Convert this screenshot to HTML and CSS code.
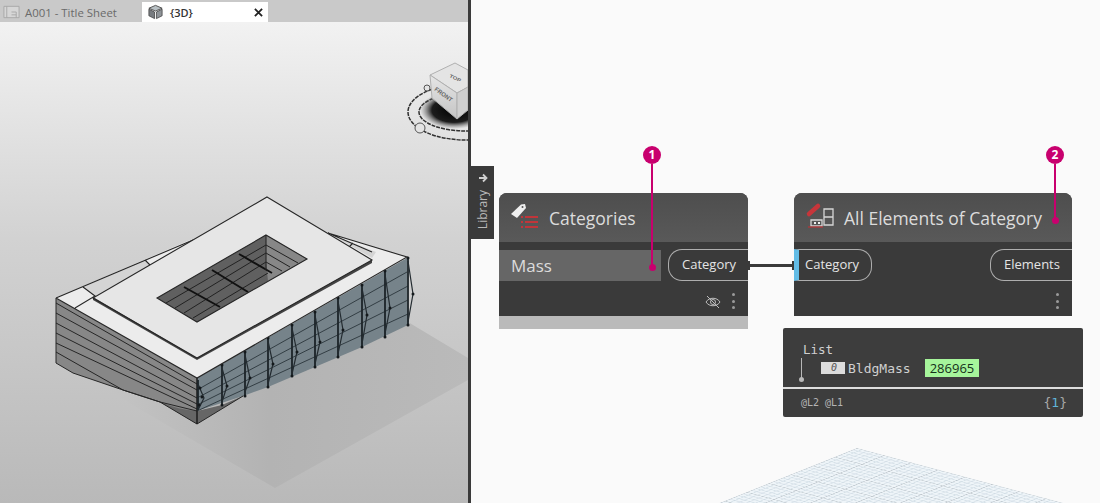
FILE: index.html
```html
<!DOCTYPE html>
<html lang="en">
<head>
<meta charset="utf-8">
<title>Dynamo and Revit</title>
<link rel="stylesheet" href="styles.css">
</head>
<body>
<div class="app">
  <section class="revit">
    <div class="tabs">
      <div class="tab">
        <svg class="tab-icon" viewBox="0 0 18 16"><path class="ti-sheet" d="M1 2h16v12H1zM4 2v12M9 8h5v6M9 11h5"/></svg>
        <span>A001 - Title Sheet</span>
      </div>
      <div class="tab tab-active">
        <svg class="tab-icon" viewBox="0 0 18 16"><path class="ti-top" d="M9 1l7 3-7 3-7-3z"/><path class="ti-left" d="M2 5l6 3v7l-6-3z"/><path class="ti-right" d="M16 5l-6 3v7l6-3z"/></svg>
        <span class="tab-name">{3D}</span>
        <svg class="tab-close" viewBox="0 0 10 10"><path d="M1 1l8 8M9 1l-8 8"/></svg>
      </div>
    </div>
    <div class="viewport">
      <svg class="scene" viewBox="0 22 468 481">
        <defs>
          <linearGradient id="floor" x1="0" y1="0" x2="0" y2="1">
            <stop offset="0" stop-color="#f2f2f2"/>
            <stop offset=".45" stop-color="#d2d2d2"/>
            <stop offset="1" stop-color="#b9b9b9"/>
          </linearGradient>
          <linearGradient id="shadow" x1="0" y1="0" x2="1" y2="0">
            <stop offset="0" stop-color="#c4c4c4"/>
            <stop offset=".45" stop-color="#b3b3b3"/>
            <stop offset="1" stop-color="#bababa"/>
          </linearGradient>
          <radialGradient id="cubeshade">
            <stop offset="0" stop-color="#000"/>
            <stop offset=".65" stop-color="#1c1c1c"/>
            <stop offset="1" stop-color="#777" stop-opacity="0"/>
          </radialGradient>
          <linearGradient id="cubeface" x1="0" y1="0" x2="0" y2="1">
            <stop offset="0" stop-color="#e6e6e6"/>
            <stop offset="1" stop-color="#c4c4c4"/>
          </linearGradient>
        </defs>
        <rect class="floor" x="0" y="22" width="468" height="481"/>
        <path class="ground-shadow" d="M107 390L275 488L468 380V358L408 322L197 378z"/>

        <!-- building walls -->
        <path class="wall-left" d="M56 298L197 378V424L160 402L123 390L73 373L56 363z"/>
        <path class="wall-under" d="M160 402C175 408 185 410 197 411V424z"/>
        <path class="wall-under" d="M197 424V411L222 405L243 396z"/>
        <path class="wall-right" d="M197 378L407 258L408 325L362 347L315 367L268 387L243 396L197 411z"/>
        <path class="thin" d="M56 303L197 384M56 313L197 390M56 323L197 398M56 333L197 404M56 343L197 409M56 352L123 390L160 402L197 411M56 298V363M56 363L73 373L123 390L160 402L197 424L243 396"/>
        <path class="thin-right" d="M197 390L407 272M197 398L408 286M197 405L408 300M197 411L408 314"/>
        <path class="edge" d="M197 378V424"/>
        <path class="rib" d="M198 380V410M222 365V405M245 352V396M268 338V387M292 325V376M315 312V367M338 298V357M362 285V347M385 271V337M408 258V325"/>
        <path class="rib-fold" d="M198 384L204 398L198 410M222 368L227 386L222 402M245 355L250 378L245 392M268 341L273 364L268 384M292 328L297 352L292 374M315 315L320 342L315 364M338 301L343 330L338 354M362 288L367 315L362 344M385 274L390 308L385 334M408 261L413 294L408 322"/>
        <path class="rib-dots" d="M222 365h0M222 405h0M227 386h0M245 352h0M245 396h0M250 378h0M268 338h0M268 387h0M273 364h0M292 325h0M292 376h0M297 352h0M315 312h0M315 367h0M320 342h0M338 298h0M338 357h0M343 330h0M362 285h0M362 347h0M367 315h0M385 271h0M385 337h0M390 308h0M408 258h0M408 325h0M413 294h0M200 388h0M202 397h0M199 405h0"/>

        <!-- roof deck -->
        <path class="deck" d="M56 298L190 240L328 233L407 257L197 378z"/>
        <path class="deck-tint" d="M83 287L145 260L150 265L95 296z"/>
        <path class="deck-tint" d="M330 234L353 243L376 252L372 258z"/>
        <path class="outline" d="M56 298L197 378L407 257L328 233M56 298L193 240M83 287L95 296L75 308M145 260L150 265M328 233L372 252M353 243L349 247"/>

        <!-- upper slab -->
        <path class="slab" d="M267 197L372 260L197 358L93 298z"/>
        <path class="slab-edge" d="M372 260V263L197 360L93 300V297L197 358z"/>
        <path class="outline" d="M267 197L372 260L197 358L93 298z"/>

        <!-- atrium -->
        <path class="hole-floor" d="M266 235L307 259L197 322L157 298z"/>
        <path class="hole-wall" d="M266 235L307 259L268 281L266 262z"/>
        <path class="hole-lines" d="M166 303L266 245L298 263M175 308L266 253L290 267M184 313L266 262L282 271M193 318L268 273"/>
        <path class="thick" d="M239 254L272 273M212 270L248 292M184 287L220 307"/>
        <path class="outline" d="M266 235L307 259L197 322L157 298zM266 235V270"/>

        <!-- view cube -->
        <ellipse class="ring-outer" cx="466" cy="112" rx="58" ry="28"/>
        <ellipse class="ring-inner" cx="466" cy="112" rx="47" ry="19"/>
        <circle class="ring-mark" cx="420" cy="128" r="5"/>
        <circle class="ring-mark" cx="427" cy="88" r="3"/>
        <ellipse class="cube-shade" cx="454" cy="110" rx="34" ry="19" fill="url(#cubeshade)"/>
        <path class="cube-top" d="M455 63L468 70V87L457 93L430 75z"/>
        <path class="cube-front" d="M430 75L457 93V119L432 98z"/>
        <path class="cube-right" d="M457 93L468 87V110L457 119z"/>
        <text class="cube-label" transform="translate(449 77) rotate(25) scale(1 .8)">TOP</text>
        <text class="cube-label" transform="translate(434 90) rotate(36)">FRONT</text>
      </svg>
    </div>
  </section>
  <div class="divider"></div>
  <main class="canvas">
    <button class="library"><span class="library-text">Library</span><svg class="library-arrow" viewBox="0 0 10 10"><path d="M1 5h7M5 1.500L8.500 5 5 8.500"/></svg></button>

    <svg class="grid" viewBox="0 0 400 60">
      <defs>
        <pattern id="cells" width="10" height="10" patternUnits="userSpaceOnUse">
          <rect class="cell-bg" width="10" height="10"/>
          <path class="cell-minor" d="M2 0V10M4 0V10M6 0V10M8 0V10M0 2H10M0 4H10M0 6H10M0 8H10"/>
          <path class="cell-major" d="M0 0V10M0 0H10"/>
        </pattern>
      </defs>
      <rect class="grid-fill" width="90" height="90" transform="matrix(2.7 .72 -2.2 .88 157 5)" fill="url(#cells)"/>
    </svg>

    <article class="node node-cat">
      <header class="node-head">
        <svg class="node-icon" viewBox="0 0 30 28"><path class="ic-tag" d="M1 12L11 2.500l4-.5 1 4L7 16z"/><path class="ic-hole" d="M12.500 5h0"/><path class="ic-list" d="M15 15h13M15 20h13M15 25h13"/><path class="ic-dots" d="M11 15h2M11 20h2M11 25h2"/></svg>
        <h2 class="node-title">Categories</h2>
      </header>
      <div class="node-row">
        <div class="node-input">Mass</div>
        <div class="port port-out">Category</div>
      </div>
      <div class="node-foot">
        <svg class="eye" viewBox="0 0 16 14"><path d="M1 7c3-5 11-5 14 0-3 5-11 5-14 0zM2 1l12 12"/><circle cx="8" cy="7" r="2.500"/></svg>
        <span class="kebab"><i></i><i></i><i></i></span>
      </div>
      <div class="node-state"></div>
    </article>

    <div class="wire"><i class="cap"></i><i class="line"></i><i class="cap"></i></div>

    <article class="node node-all">
      <header class="node-head">
        <svg class="node-icon" viewBox="0 0 30 28"><path class="ic-pen" d="M4 12L13 4"/><path class="ic-frame" d="M19 7h9v16h-9zM19 15h9M6 18h11v6H6z"/><path class="ic-dots2" d="M9 21h2M13 21h2"/><path class="ic-base" d="M3 25h15"/></svg>
        <h2 class="node-title">All Elements of Category</h2>
      </header>
      <div class="node-row node-row-ports">
        <div class="port port-in">Category</div>
        <div class="port port-out">Elements</div>
      </div>
      <div class="node-foot">
        <span class="kebab"><i></i><i></i><i></i></span>
      </div>
    </article>

    <section class="watch">
      <div class="watch-body">
        <div class="watch-list">List</div>
        <div class="watch-item">
          <span class="watch-index">0</span>
          <span class="watch-name">BldgMass</span>
          <span class="watch-id">286965</span>
        </div>
        <i class="watch-tree"></i>
      </div>
      <div class="watch-foot">
        <span>@L2 @L1</span>
        <span class="watch-count">{<b>1</b>}</span>
      </div>
    </section>

    <div class="callout callout-one"><span class="badge">1</span><i class="stem"></i><i class="dot"></i></div>
    <div class="callout callout-two"><span class="badge">2</span><i class="stem"></i><i class="dot"></i></div>
  </main>
</div>
</body>
</html>
```

FILE: styles.css
```css
* { box-sizing: border-box; }
html, body { margin: 0; height: 100%; overflow: hidden; }
body { font-family: "Open Sans", "Noto Sans", sans-serif; background: #fafafa; }
.app { display: flex; width: 1100px; height: 503px; }

/* left: Revit view */
.revit { width: 468px; display: flex; flex-direction: column; }
.tabs { height: 22px; background: #c9c9c9; padding-top: 2px; display: flex; flex: none; }
.tab { width: 142px; display: flex; align-items: center; gap: 5px; padding-left: 3px; font-size: 11.400px; color: #6a6a6a; }
.tab-active { width: 126px; background: #fff; color: #333; padding: 0 5px 0 5px; gap: 6px; }
.tab-name { flex: 1; font-weight: 600; font-size: 11px; }
.tab-icon { width: 17px; height: 16px; }
.ti-sheet { fill: #d6d6d6; stroke: #a8a8a8; stroke-width: 1; }
.ti-top { fill: #b8c0c4; stroke: #4c4c4c; stroke-width: 1; }
.ti-left { fill: #787c80; stroke: #3e3e3e; stroke-width: .8; }
.ti-right { fill: #8f9498; stroke: #3e3e3e; stroke-width: .8; }
.tab-close { width: 9px; height: 9px; }
.tab-close path { fill: none; stroke: #222; stroke-width: 2; }
.viewport { flex: 1; min-height: 0; }
.scene { display: block; width: 468px; height: 481px; }
.floor { fill: url(#floor); }
.ground-shadow { fill: url(#shadow); }

.wall-left { fill: #878787; }
.wall-under { fill: #666; }
.wall-right { fill: #76838a; }
.thin { fill: none; stroke: #262626; stroke-width: 1; }
.thin-right { fill: none; stroke: #333e44; stroke-width: 1; }
.edge { fill: none; stroke: #1c1c1c; stroke-width: 1.500; }
.rib { fill: none; stroke: #1c2428; stroke-width: 1.800; }
.rib-fold { fill: none; stroke: #232b30; stroke-width: 1.200; }
.rib-dots { fill: none; stroke: #14191c; stroke-width: 3; stroke-linecap: round; }
.deck { fill: #ececec; }
.deck-tint { fill: #d4d4d4; }
.outline { fill: none; stroke: #262626; stroke-width: 1.100; }
.slab { fill: #e6e6e6; }
.slab-edge { fill: #444; }
.hole-floor { fill: #606060; }
.hole-wall { fill: #878787; }
.hole-lines { fill: none; stroke: #222; stroke-width: 1; }
.thick { fill: none; stroke: #111; stroke-width: 2; }

.ring-outer { fill: none; stroke: #303030; stroke-width: 1.500; stroke-dasharray: 4 1; }
.ring-inner { fill: #e6e6e6; stroke: #303030; stroke-width: 1.500; stroke-dasharray: 4 1; }
.ring-mark { fill: #e4e4e4; stroke: #555; stroke-width: 1; }
.cube-top { fill: #e4e4e4; stroke: #b0b0b0; stroke-width: 1; }
.cube-front { fill: url(#cubeface); stroke: #b0b0b0; stroke-width: 1; }
.cube-right { fill: #cfcfcf; stroke: #b0b0b0; stroke-width: 1; }
.cube-label { font-family: "Liberation Sans", sans-serif; font-size: 6px; font-weight: 700; fill: #666; }

.divider { width: 3px; flex: none; background: #3a3a3a; }

/* right: Dynamo canvas */
.canvas { position: relative; flex: 1; background: #fafafa; overflow: hidden; }
.library { position: absolute; left: 0; top: 166px; width: 23px; height: 73px; padding: 7px 0 0; border: 0; background: #3a3a3a; color: #b8b8b8; display: flex; flex-direction: column-reverse; justify-content: flex-end; align-items: center; gap: 7px; font: 12px "Open Sans", sans-serif; }
.library-text { writing-mode: vertical-rl; transform: rotate(180deg); line-height: 14px; }
.library-arrow { width: 10px; height: 10px; flex: none; }
.library-arrow path { fill: none; stroke: #d0d0d0; stroke-width: 1.800; }

.grid { position: absolute; left: 229px; top: 443px; width: 400px; height: 60px; }
.cell-bg { fill: #eff5f9; }
.cell-minor { fill: none; stroke: #ccd9e2; stroke-width: .3; }
.cell-major { fill: none; stroke: #a6afb6; stroke-width: .4; }

.node { position: absolute; top: 193px; overflow: hidden; border-radius: 8px 8px 0 0; background: #3a3a3a; color: #e2e2e2; display: flex; flex-direction: column; }
.node-cat { left: 28px; width: 249px; height: 136px; }
.node-all { left: 323px; width: 278px; height: 123px; }
.node-head { height: 49px; flex: none; background: linear-gradient(#4e4e4e, #595959); display: flex; align-items: center; padding-left: 11px; gap: 9px; }
.node-icon { width: 30px; height: 28px; flex: none; margin-top: -3px; }
.node-title { margin: 0; font-size: 17.500px; font-weight: 400; line-height: 24px; color: #dcdcdc; white-space: nowrap; }
.ic-tag { fill: #efefef; }
.ic-hole { fill: none; stroke: #555; stroke-width: 2; stroke-linecap: round; }
.ic-list { fill: none; stroke: #c1353a; stroke-width: 2.200; }
.ic-dots { fill: none; stroke: #c1353a; stroke-width: 2.200; }
.ic-pen { fill: none; stroke: #c6353a; stroke-width: 4.500; stroke-linecap: round; }
.ic-frame { fill: none; stroke: #d6d6d6; stroke-width: 1.300; }
.ic-dots2 { fill: none; stroke: #eee; stroke-width: 2; }
.ic-base { fill: none; stroke: #a83a3c; stroke-width: 1.300; }

.node-row { height: 39px; flex: none; display: flex; padding-top: 7px; }
.node-input { width: 162px; height: 31px; margin-top: 1px; background: #666; padding-left: 12px; font-size: 17px; line-height: 31px; color: #dcdcdc; }
.port { height: 32px; border: 1px solid #aeaeae; font-size: 13px; line-height: 29px; color: #e4e4e4; white-space: nowrap; }
.port-out { margin-left: auto; border-right: 0; border-radius: 14px 0 0 14px; }
.node-cat .port-out { width: 80px; padding-left: 13px; }
.node-all .port-out { width: 82px; padding-left: 13px; }
.port-in { width: 78px; padding-left: 6px; border-left: 5px solid #62bce6; border-radius: 0 14px 14px 0; }
.node-row-ports { align-items: flex-start; }
.node-foot { height: 35px; flex: none; display: flex; justify-content: flex-end; align-items: flex-start; gap: 11px; padding: 12px 13px 0 0; }
.eye { width: 16px; height: 14px; margin-top: 2px; }
.eye path, .eye circle { fill: none; stroke: #bdbdbd; stroke-width: 1; }
.kebab { display: flex; flex-direction: column; gap: 3.500px; }
.kebab i { width: 3px; height: 3px; background: #9a9a9a; border-radius: 50%; display: block; }
.node-state { height: 13px; flex: none; background: #bababa; }

.wire { position: absolute; left: 277px; top: 261px; width: 46px; height: 9px; display: flex; align-items: center; }
.wire .line { flex: 1; height: 3px; background: #3a3a3a; }
.wire .cap { width: 2px; height: 9px; background: #3a3a3a; }

.watch { position: absolute; left: 312px; top: 328px; width: 300px; height: 89px; background: #3d3d3d; border-radius: 2px; font-family: "DejaVu Sans Mono", "Liberation Mono", monospace; color: #d0d0d0; display: flex; flex-direction: column; }
.watch-body { position: relative; height: 61px; flex: none; padding: 14px 0 0 20px; border-bottom: 2px solid #dedede; }
.watch-list { font-size: 12.500px; line-height: 16px; }
.watch-item { display: flex; align-items: center; height: 18px; margin: 1px 0 0 18px; font-size: 13px; }
.watch-index { width: 24px; height: 12px; background: #dcdcdc; color: #555; font-size: 10px; font-style: italic; line-height: 12px; text-align: right; padding-right: 8px; }
.watch-name { margin-left: 3px; width: 77px; }
.watch-id { width: 54px; height: 18px; background: #a6f59b; color: #15301a; font: 13px/18px "Open Sans", sans-serif; text-align: center; }
.watch-tree { position: absolute; left: 18px; top: 30px; width: 1px; height: 21px; background: #b8b8b8; }
.watch-tree::after { content: ""; position: absolute; left: -2px; bottom: -3px; width: 5px; height: 5px; border-radius: 50%; background: #b8b8b8; }
.watch-foot { flex: 1; display: flex; justify-content: space-between; align-items: center; padding: 0 16px 2px 18px; font-size: 10px; color: #b4b4b4; }
.watch-count { font-size: 13px; color: #a8a8a8; }
.watch-count b { font-weight: 400; color: #5fb4d8; }

.callout { position: absolute; width: 18px; display: flex; flex-direction: column; align-items: center; }
.callout-one { left: 172px; top: 146px; height: 125px; }
.callout-two { left: 575px; top: 146px; height: 78px; }
.badge { width: 18px; height: 18px; flex: none; border-radius: 50%; background: #c8006e; color: #fff; font: 700 12px/18px "Open Sans", sans-serif; text-align: center; }
.stem { width: 2px; flex: 1; background: #c8006e; }
.dot { width: 7px; height: 7px; flex: none; margin-top: -3px; border-radius: 50%; background: #c8006e; }
```
